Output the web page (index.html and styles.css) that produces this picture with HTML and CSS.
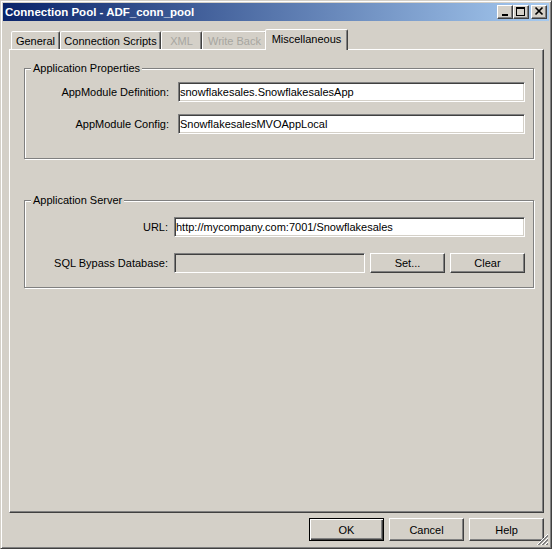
FILE: index.html
```html
<!DOCTYPE html>
<html lang="en">
<head>
    <meta charset="UTF-8">
    <title>Connection Pool - ADF_conn_pool</title>
    <link rel="stylesheet" href="styles.css">
</head>
<body>

    <div class="window">

        <!-- Title Bar -->
        <div class="titlebar">
            <span class="title">Connection Pool - ADF_conn_pool</span>
            <div class="caption-buttons">
                <span class="cap-btn">
                    <svg width="14" height="12" viewBox="0 0 14 12"><rect x="4" y="8" width="6" height="2" fill="#000"/></svg>
                </span>
                <span class="cap-btn">
                    <svg width="14" height="12" viewBox="0 0 14 12"><rect x="2.5" y="1.5" width="8" height="8" fill="none" stroke="#000"/><rect x="2" y="1" width="9" height="2" fill="#000"/></svg>
                </span>
                <span class="cap-btn close">
                    <svg width="14" height="12" viewBox="0 0 14 12"><path d="M3.5 1.5 L10.5 8.5 M10.5 1.5 L3.5 8.5" stroke="#000" stroke-width="1.7"/></svg>
                </span>
            </div>
        </div>

        <div class="content">

            <!-- Tabs -->
            <div class="tabs">
                <span class="tab tab-general">General</span>
                <span class="tab tab-scripts">Connection Scripts</span>
                <span class="tab tab-xml disabled">XML</span>
                <span class="tab tab-writeback disabled">Write Back</span>
                <span class="tab tab-misc selected">Miscellaneous</span>
            </div>

            <div class="panel">

                <!-- Application Properties -->
                <div class="group group-props">
                    <div class="group-title">Application Properties</div>
                    <div class="form-grid props-grid">
                        <label>AppModule Definition:</label>
                        <input class="field" type="text" value="snowflakesales.SnowflakesalesApp">
                        <label>AppModule Config:</label>
                        <input class="field" type="text" value="SnowflakesalesMVOAppLocal">
                    </div>
                </div>

                <!-- Application Server -->
                <div class="group group-server">
                    <div class="group-title">Application Server</div>
                    <div class="form-grid server-grid">
                        <label>URL:</label>
                        <input class="field" type="text" value="http://mycompany.com:7001/Snowflakesales">
                        <label>SQL Bypass Database:</label>
                        <div class="bypass-row">
                            <input class="field" type="text" disabled>
                            <button class="btn">Set...</button>
                            <button class="btn">Clear</button>
                        </div>
                    </div>
                </div>

            </div>

            <!-- Dialog Buttons -->
            <div class="footer">
                <button class="btn btn-default">OK</button>
                <button class="btn">Cancel</button>
                <button class="btn">Help</button>
            </div>
        </div>

        <svg class="grip" width="12" height="12" viewBox="0 0 12 12">
            <path d="M11 1 L1 11 M11 5 L5 11 M11 9 L9 11" stroke="#808080" stroke-width="1"/>
            <path d="M11 2 L2 11 M11 6 L6 11 M11 10 L10 11" stroke="#808080" stroke-width="1"/>
            <path d="M11 0 L0 11 M11 4 L4 11 M11 8 L8 11" stroke="#fff" stroke-width="1"/>
        </svg>
    </div>

</body>
</html>
```

FILE: styles.css
```css
body {
    margin: 0;
    font-family: "Liberation Sans", Arial, sans-serif;
    font-size: 11px;
    background-color: #d4d0c8;
}

/* Window frame */
.window {
    position: relative;
    width: 552px;
    height: 549px;
    box-sizing: border-box;
    padding: 2px;
    background: #d4d0c8;
    border: 1px solid;
    border-color: #d4d0c8 #404040 #404040 #d4d0c8;
    box-shadow: inset 1px 1px #fff, inset -1px -1px #808080;
    display: flex;
    flex-direction: column;
}

/* Title bar */
.titlebar {
    height: 18px;
    padding-left: 2px;
    display: flex;
    align-items: center;
    justify-content: space-between;
    background: linear-gradient(to right, #0a246a, #a6caf0);
}

.title {
    color: #fff;
    font-weight: bold;
    font-size: 11.5px;
}

.caption-buttons {
    display: flex;
    margin-right: 2px;
}

.cap-btn {
    width: 16px;
    height: 14px;
    box-sizing: border-box;
    display: flex;
    background: #d4d0c8;
    border: 1px solid;
    border-color: #fff #404040 #404040 #fff;
    box-shadow: inset -1px -1px #808080;
}

.cap-btn.close { margin-left: 2px; }

/* Body */
.content {
    flex: 1;
    min-height: 0;
    display: flex;
    flex-direction: column;
    padding: 8px 5px 5px 6px;
}

/* Tabs */
.tabs {
    position: relative;
    z-index: 1;
    height: 20px;
    padding-left: 2px;
    display: flex;
    align-items: flex-end;
}

.tab {
    height: 18px;
    box-sizing: border-box;
    display: flex;
    align-items: center;
    justify-content: center;
    border: 1px solid;
    border-bottom: none;
    border-color: #fff #404040 transparent #fff;
    border-radius: 2px 2px 0 0;
    box-shadow: inset -1px 0 #808080;
    background: #d4d0c8;
}

.tab.disabled { color: #a7a6a0; }

.tab-general { width: 49px; }
.tab-scripts { width: 101px; }
.tab-xml { width: 41px; }
.tab-writeback { width: 65px; }

.tab.selected {
    width: 83px;
    height: 21px;
    margin: 0 0 -1px -2px;
    padding-bottom: 2px;
}

/* Tab panel */
.panel {
    flex: 1;
    border: 1px solid;
    border-color: #fff #404040 #404040 #fff;
    box-shadow: inset -1px -1px #808080;
    padding: 18px 9px 0 14px;
}

/* Group boxes */
.group {
    border: 1px solid #808080;
    box-shadow: inset 1px 1px #fff, 1px 1px #fff;
}

.group-props { padding-bottom: 24px; }
.group-server { margin-top: 41px; padding-bottom: 14px; }

.group-title {
    width: fit-content;
    margin: -7px 0 0 6px;
    padding: 0 2px;
    line-height: 13px;
    background: #d4d0c8;
}

.form-grid {
    display: grid;
    align-items: center;
    padding-right: 8px;
}

.form-grid label { text-align: right; }

.props-grid {
    grid-template-columns: 144px 1fr;
    column-gap: 9px;
    row-gap: 12px;
    margin-top: 7px;
}

.server-grid {
    grid-template-columns: 143px 1fr;
    column-gap: 6px;
    row-gap: 16px;
    margin-top: 10px;
}

.field {
    height: 20px;
    width: 100%;
    box-sizing: border-box;
    margin: 0;
    padding: 0 1px;
    font: inherit;
    color: #000;
    background: #fff;
    border: 1px solid;
    border-color: #808080 #fff #fff #808080;
    box-shadow: inset 1px 1px #404040, inset -1px -1px #d4d0c8;
    outline: none;
}

.field:disabled { background: #d4d0c8; }

.bypass-row {
    display: flex;
    gap: 5px;
}

.bypass-row .field { flex: 1; }
.bypass-row .btn { height: 20px; }

/* Buttons */
.btn {
    width: 75px;
    height: 23px;
    box-sizing: border-box;
    margin: 0;
    padding: 0;
    font: inherit;
    color: #000;
    background: #d4d0c8;
    border: 1px solid;
    border-color: #fff #404040 #404040 #fff;
    box-shadow: inset -1px -1px #808080;
}

.btn-default {
    border-color: #000;
    box-shadow: inset 1px 1px #fff, inset -1px -1px #404040, inset -2px -2px #808080;
}

.footer {
    margin-top: 5px;
    display: flex;
    justify-content: flex-end;
    gap: 5px;
}

/* Size grip */
.grip {
    position: absolute;
    right: 2px;
    bottom: 2px;
}
```
